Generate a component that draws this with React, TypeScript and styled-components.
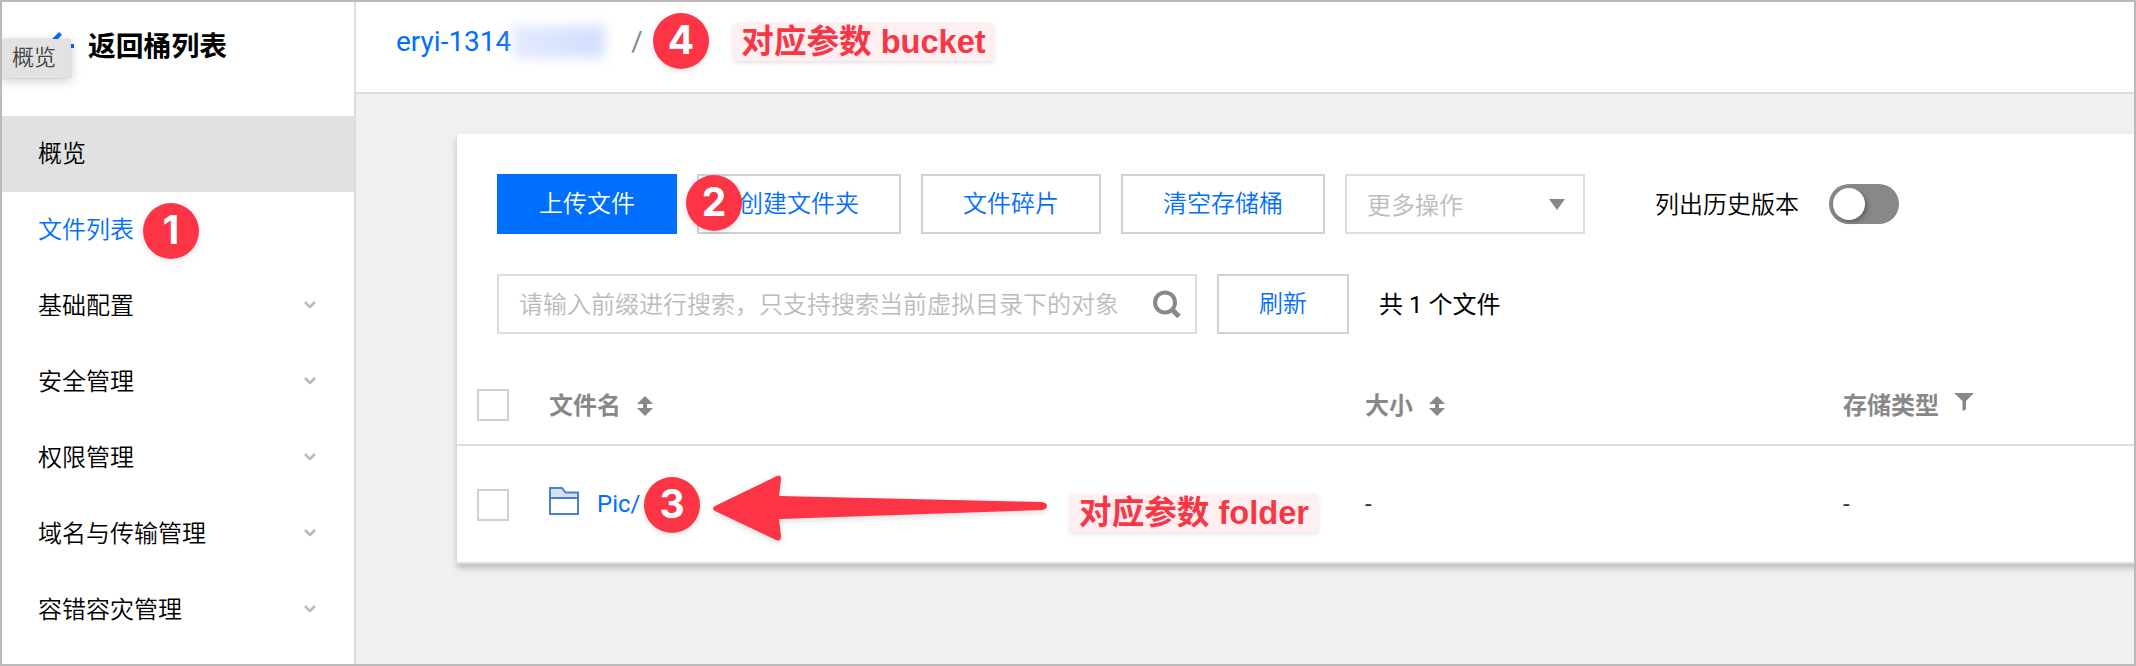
import React from "react";
import styled, { createGlobalStyle } from "styled-components";

const GlobalStyle = createGlobalStyle`
  * { box-sizing: border-box; }
  body {
    margin: 0;
    font-family: Roboto, "Noto Sans CJK SC", sans-serif;
    font-size: 24px;
    color: #000;
    background: #f0f0f0;
  }
`;

const Frame = styled.div`
  position: relative;
  display: flex;
  width: 2136px;
  height: 666px;
  overflow: hidden;
  border: 2px solid #bababa;
  background: #f0f0f0;
`;

const Sidebar = styled.aside`
  flex: none;
  width: 354px;
  border-right: 2px solid #dcdcdc;
  background: #fff;
`;

const BackLink = styled.div`
  display: flex;
  align-items: center;
  height: 114px;
  padding: 0 0 30px 40px;
  font-size: 27.8px;
  font-weight: 700;
`;

const BackArrow = styled.svg`
  width: 34px;
  height: 34px;
  margin: 3px 12px 0 0;
`;

const MenuItem = styled.div<{ $hover?: boolean; $active?: boolean }>`
  display: flex;
  align-items: center;
  justify-content: space-between;
  height: 76px;
  padding: 0 38px 5px 36px;
  background: ${(p) => (p.$hover ? "#e1e1e1" : "#fff")};
  color: ${(p) => (p.$active ? "#006eff" : "#000")};
  font-weight: 350;
`;

const Chevron = styled.svg`
  width: 12px;
  height: 10px;
  margin-top: 2px;
`;

const Main = styled.main`
  flex: 1;
  min-width: 0;
`;

const Header = styled.header`
  display: flex;
  align-items: center;
  height: 92px;
  padding: 0 0 11px 40px;
  border-bottom: 2px solid #dcdcdc;
  background: #fff;
  font-size: 28px;
`;

const BucketName = styled.span`
  color: #006eff;
`;

const Redacted = styled.span`
  width: 92px;
  height: 32px;
  margin: 0 26px 0 2px;
  background: linear-gradient(90deg, #e2e9ff, #d3defe);
  filter: blur(6px);
`;

const Slash = styled.span`
  color: #888;
`;

const Card = styled.section`
  width: 1720px;
  height: 430px;
  margin: 40px 0 0 101px;
  padding-top: 40px;
  border-bottom: 2px solid #dedede;
  border-top-left-radius: 3px;
  background: #fff;
  box-shadow: 0 4px 6px rgba(0, 0, 0, 0.22);
`;

const Toolbar = styled.div`
  display: flex;
  align-items: center;
  gap: 20px;
  height: 60px;
  margin-left: 40px;
`;

const SearchBar = styled(Toolbar)`
  margin-top: 40px;
`;

const Button = styled.button<{ $primary?: boolean; $width: number }>`
  width: ${(p) => p.$width}px;
  height: 60px;
  padding: 0 0 5px;
  border: 2px solid ${(p) => (p.$primary ? "#006eff" : "#cfd2d4")};
  background: ${(p) => (p.$primary ? "#006eff" : "#fff")};
  color: ${(p) => (p.$primary ? "#fff" : "#006eff")};
  font: inherit;
  font-weight: 350;
`;

const Select = styled.div`
  display: flex;
  align-items: center;
  justify-content: space-between;
  width: 240px;
  height: 60px;
  padding: 0 18px 2px 20px;
  border: 2px solid #dddddd;
  color: #bbb;
  font-weight: 350;
`;

const Caret = styled.span`
  margin-top: 3px;
  border: 8px solid transparent;
  border-top: 11px solid #888;
  border-bottom: 0;
`;

const SwitchLabel = styled.span`
  margin: 0 0 3px 50px;
  font-weight: 350;
`;

const Switch = styled.span`
  display: flex;
  align-items: center;
  width: 70px;
  height: 40px;
  margin-left: 10px;
  padding: 0 4px;
  border-radius: 20px;
  background: #888;
`;

const Knob = styled.span`
  width: 32px;
  height: 32px;
  border-radius: 50%;
  background: #fff;
  box-shadow: 2px 2px 4px rgba(0, 0, 0, 0.3);
`;

const SearchBox = styled.div`
  display: flex;
  align-items: center;
  justify-content: space-between;
  width: 700px;
  height: 60px;
  padding: 0 13px 4px 20px;
  border: 2px solid #dddddd;
  color: #bbb;
  font-weight: 350;
  white-space: nowrap;
`;

const SearchIcon = styled.svg`
  width: 30px;
  height: 30px;
  margin-top: 4px;
`;

const FileCount = styled.span`
  margin: 0 0 4px 10px;
`;

const Cell = styled.div`
  display: flex;
  align-items: center;
`;

const Row = styled.div<{ $head?: boolean }>`
  display: grid;
  grid-template-columns: 72px 816px 478px 1fr;
  align-items: center;
  height: ${(p) => (p.$head ? 82 : 116)}px;
  padding: 2px 0 0 20px;
  color: ${(p) => (p.$head ? "#888" : "#333")};
  font-weight: ${(p) => (p.$head ? 700 : 400)};

  ${Cell} {
    padding-bottom: ${(p) => (p.$head ? 4 : 2)}px;
  }
`;

const Table = styled.div`
  margin-top: 30px;
  ${Row}:first-child {
    border-bottom: 2px solid #dddddd;
  }
`;

const Checkbox = styled.span`
  width: 32px;
  height: 32px;
  border: 2px solid #cfd2d4;
  background: #fff;
`;

const SortIcon = styled.svg`
  width: 16px;
  height: 20px;
  margin: 5px 0 0 16px;
`;

const FilterIcon = styled.svg`
  width: 20px;
  height: 18px;
  margin: -2px 0 0 15px;
`;

const FolderIcon = styled.svg`
  width: 30px;
  height: 28px;
  margin: -7px 18px 0 0;
`;

const FileLink = styled.a`
  color: #006eff;
`;

/* Annotations float over the console page. */
const Badge = styled.span<{ $x: number; $y: number }>`
  position: absolute;
  left: ${(p) => p.$x}px;
  top: ${(p) => p.$y}px;
  width: 56px;
  height: 56px;
  border-radius: 50%;
  background: #fd3445;
  box-shadow: 0 2px 6px rgba(0, 0, 0, 0.12);
  color: #fff;
  font: 700 39px/54px Inter, sans-serif;
  text-align: center;
`;

const Note = styled.span<{ $x: number; $y: number; $width: number }>`
  position: absolute;
  left: ${(p) => p.$x}px;
  top: ${(p) => p.$y}px;
  width: ${(p) => p.$width}px;
  height: 38px;
  border-radius: 3px;
  background: #ffeff1;
  box-shadow: 0 2px 5px rgba(0, 0, 0, 0.12);
  color: #f93645;
  font: 700 32.6px/37px "Liberation Sans", "Noto Sans CJK SC", sans-serif;
  text-align: center;
  white-space: nowrap;
`;

const Pointer = styled.svg`
  position: absolute;
  left: 704px;
  top: 464px;
  width: 350px;
  height: 86px;
  filter: drop-shadow(0 2px 3px rgba(0, 0, 0, 0.15));
`;

const Tooltip = styled.span`
  position: absolute;
  left: -2px;
  top: 37px;
  width: 71px;
  height: 39px;
  padding-left: 12px;
  border-radius: 0 3px 3px 0;
  background: #e2e2e2;
  box-shadow: 0 3px 12px rgba(0, 0, 0, 0.2), 0 0 1px rgba(0, 0, 0, 0.4);
  color: #444;
  font-size: 22px;
  line-height: 38px;
  font-weight: 350;
`;

const groups = ["基础配置", "安全管理", "权限管理", "域名与传输管理", "容错容灾管理"];

const Sort = () => (
  <SortIcon viewBox="0 0 16 20" fill="#888">
    <path d="M8 0l8 8h-6v4h6l-8 8-8-8h6V8H0z" />
  </SortIcon>
);

export default function App() {
  return (
    <>
      <GlobalStyle />
      <Frame>
        <Sidebar>
          <BackLink>
            <BackArrow viewBox="0 0 34 34" fill="none" stroke="#006eff" strokeWidth="4">
              <path d="M18.500 4.500L6 17l12.500 12.500M6 17h26" />
            </BackArrow>
            返回桶列表
          </BackLink>
          <MenuItem $hover>概览</MenuItem>
          <MenuItem $active>文件列表</MenuItem>
          {groups.map((name) => (
            <MenuItem key={name}>
              {name}
              <Chevron viewBox="0 0 12 10" fill="none" stroke="#bbb" strokeWidth="2.600">
                <path d="M1 2l5 5 5-5" />
              </Chevron>
            </MenuItem>
          ))}
        </Sidebar>
        <Main>
          <Header>
            <BucketName>eryi-1314</BucketName>
            <Redacted />
            <Slash>/</Slash>
          </Header>
          <Card>
            <Toolbar>
              <Button $primary $width={180}>上传文件</Button>
              <Button $width={204}>创建文件夹</Button>
              <Button $width={180}>文件碎片</Button>
              <Button $width={204}>清空存储桶</Button>
              <Select>
                更多操作
                <Caret />
              </Select>
              <SwitchLabel>列出历史版本</SwitchLabel>
              <Switch>
                <Knob />
              </Switch>
            </Toolbar>
            <SearchBar>
              <SearchBox>
                请输入前缀进行搜索，只支持搜索当前虚拟目录下的对象
                <SearchIcon viewBox="0 0 30 30" fill="none" stroke="#888" strokeWidth="4">
                  <circle cx="13" cy="13.500" r="10" />
                  <path d="M20 20.500l7 7" strokeWidth="5" />
                </SearchIcon>
              </SearchBox>
              <Button $width={132}>刷新</Button>
              <FileCount>共 1 个文件</FileCount>
            </SearchBar>
            <Table>
              <Row $head>
                <Checkbox />
                <Cell>文件名<Sort /></Cell>
                <Cell>大小<Sort /></Cell>
                <Cell>
                  存储类型
                  <FilterIcon viewBox="0 0 20 18" fill="#888">
                    <path d="M0 0h20l-8 8v8.500L8.500 18V8z" />
                  </FilterIcon>
                </Cell>
              </Row>
              <Row>
                <Checkbox />
                <Cell>
                  <FolderIcon viewBox="0 0 30 28" fill="#fff" stroke="#4a80d0" strokeWidth="2">
                    <path d="M1 1h12l3.500 4.500H29V11H1z" fill="#d3e0f8" />
                    <path d="M1 11h28v16H1z" />
                  </FolderIcon>
                  <FileLink>Pic/</FileLink>
                </Cell>
                <Cell>-</Cell>
                <Cell>-</Cell>
              </Row>
            </Table>
          </Card>
        </Main>
        <Tooltip>概览</Tooltip>
        <Badge $x={141} $y={201}>1</Badge>
        <Badge $x={684} $y={173}>2</Badge>
        <Badge $x={642} $y={475}>3</Badge>
        <Badge $x={651} $y={11}>4</Badge>
        <Note $x={731} $y={21} $width={261}>对应参数 bucket</Note>
        <Note $x={1068} $y={492} $width={248}>对应参数 folder</Note>
        <Pointer viewBox="706 466 350 86">
          <path
            d="M715 506L777 476Q781 474 781 479L779 496L1042 502Q1047 503 1047 506T1042 510L779 519L781 536Q781 542 776 540L715 511Q711 508.500 715 506Z"
            fill="#fd3445"
          />
        </Pointer>
      </Frame>
    </>
  );
}
